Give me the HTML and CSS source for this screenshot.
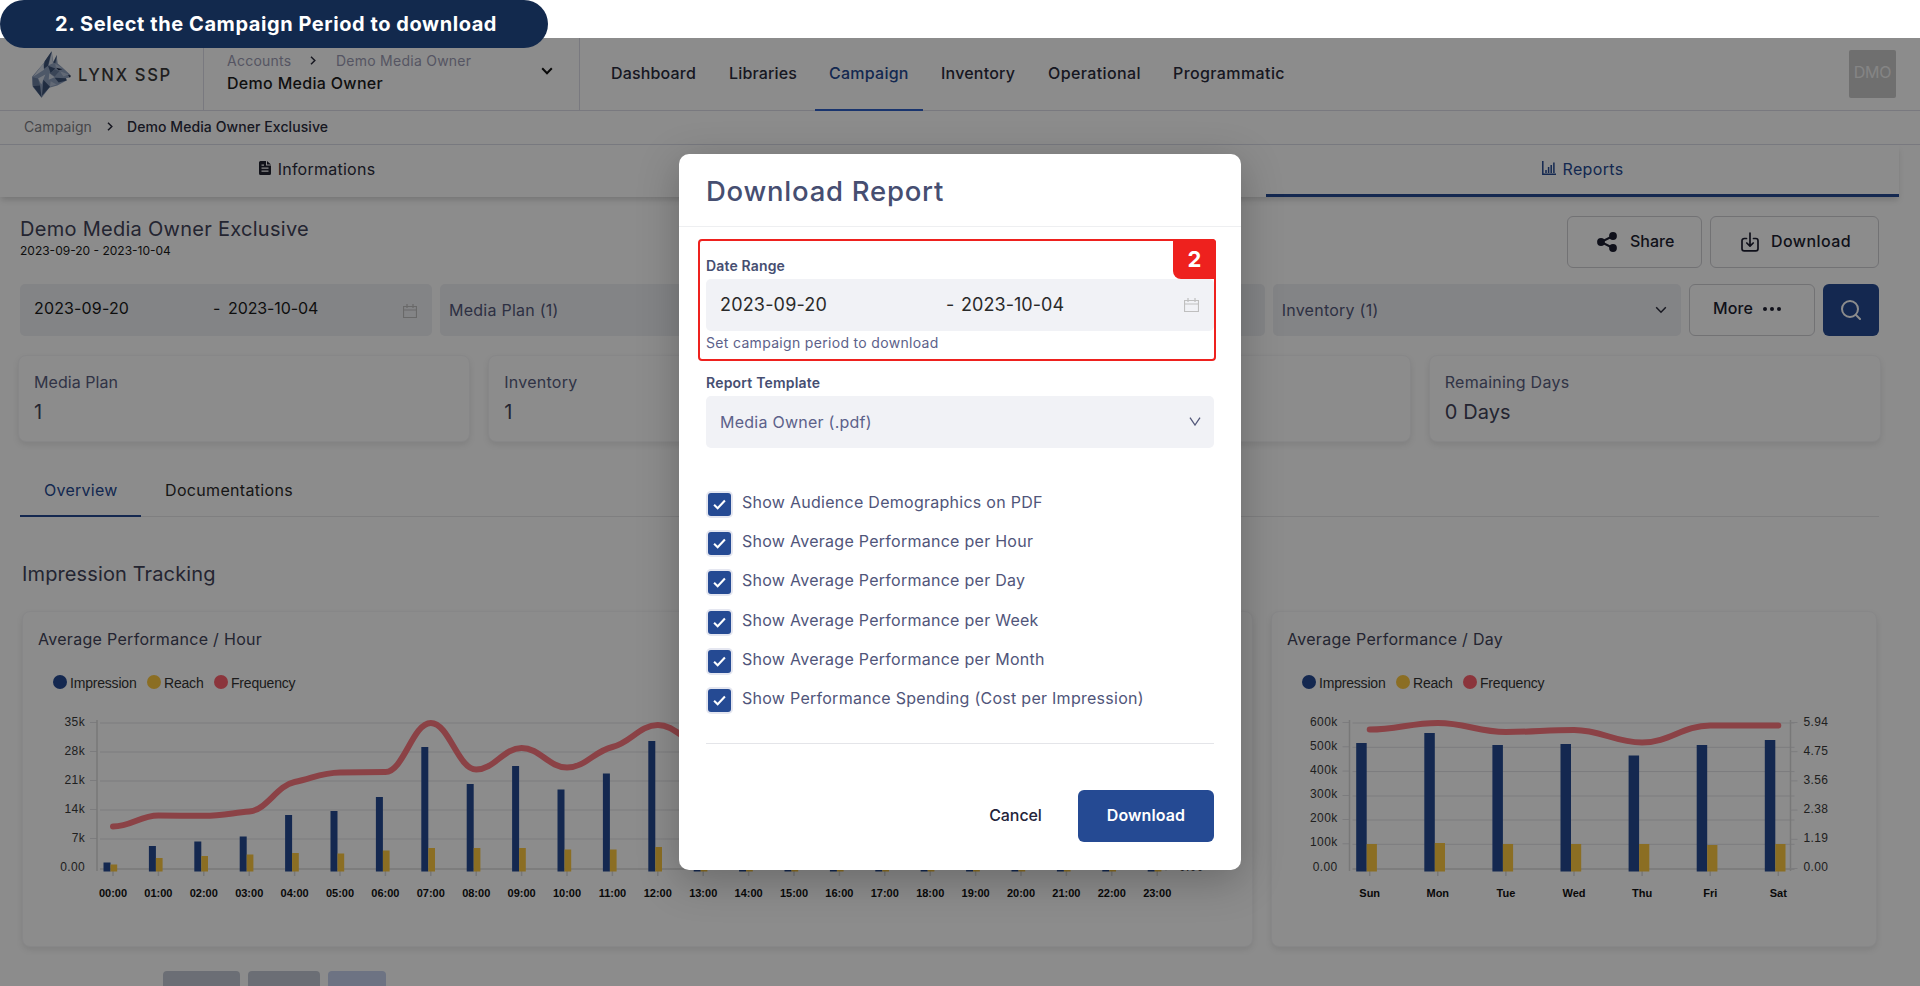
FILE: index.html
```html
<!DOCTYPE html>
<html lang="en">
<head>
<meta charset="utf-8">
<title>Download Report</title>
<link rel="stylesheet" href="styles.css">
</head>
<body>
<div class="app">
  <header class="header">
    <div class="brand">
      <svg class="wolf" viewBox="33 15 123 146">
        <path fill="#8fa0bd" d="M36 95 70 55 95 18 100 50 110 30 113 55 128 68 150 88 152 96 138 99 140 106 112 121 88 128 65 158 38 125z"/>
        <path fill="#3d5377" d="M95 18 74 48 70 72 84 62zM100 52 111 29 106 54zM38 122 65 158 60 120zM84 62 106 70 92 84zM70 104 90 125 66 152zM104 98 138 99 140 106 116 112z"/>
        <path fill="#d3dbe8" d="M70 55 72 74 50 88 40 94zM95 24 99 54 86 60zM88 84 104 96 86 104zM76 88 64 118 54 100z"/>
        <path fill="#b3c0d6" d="M106 56 126 68 108 70zM120 78 146 88 130 94zM92 108 110 118 90 124z"/>
        <path fill="#6b7e9f" d="M38 96 54 100 60 120 38 120zM104 72 118 78 104 94 90 84z"/>
        <path fill="#1a2744" d="M108 68 127 72 116 75zM144 89 153 92 149 97z"/>
      </svg>
      <span class="brand-name">LYNX SSP</span>
    </div>
    <div class="account">
      <div class="account-text">
        <div class="account-path"><span class="p1">Accounts</span>
          <svg width="6" height="9" viewBox="0 0 6 9"><path class="ln" d="M1 .8 4.8 4.5 1 8.2"/></svg>
          <span class="p2">Demo Media Owner</span></div>
        <div class="account-name">Demo Media Owner</div>
      </div>
      <svg class="account-caret" width="12" height="8" viewBox="0 0 12 8"><path class="ln thick" d="M1.2 1.3 6 6.2 10.8 1.3"/></svg>
    </div>
    <nav class="nav">
      <a class="n1">Dashboard</a><a class="n2">Libraries</a><a class="n3 active">Campaign</a><a class="n4">Inventory</a><a class="n5">Operational</a><a class="n6">Programmatic</a>
    </nav>
    <div class="avatar">DMO</div>
  </header>
  <div class="crumbs"><span class="c1">Campaign</span>
    <svg width="6" height="9" viewBox="0 0 6 9"><path class="ln" d="M1 .8 4.8 4.5 1 8.2"/></svg>
    <span class="c2">Demo Media Owner Exclusive</span></div>
  <div class="tabs">
    <div class="tab">
      <svg width="12" height="14" viewBox="0 0 12 14"><path fill="#222330" fill-rule="evenodd" d="M1.5 0H7v4.5h5v8a1.5 1.5 0 0 1-1.5 1.5h-9A1.5 1.5 0 0 1 0 12.500V1.500A1.500 1.500 0 0 1 1.500 0zM2.500 6.500v1.200h7V6.500zM2.500 9.500v1.200h7V9.500zM2.500 3.500v1.200H5V3.500zM8 0l4 3.500H8z"/></svg>
      <span>Informations</span>
    </div>
    <div class="tab"></div>
    <div class="tab active">
      <svg width="14" height="14" viewBox="0 0 14 14"><path fill="none" stroke="#254a93" stroke-width="1.500" d="M.8 0v13.200H14M4 12V9M6.600 12V6M9.200 12V4M11.900 12V1.500"/></svg>
      <span class="reports">Reports</span>
    </div>
  </div>

  <main class="content">
    <div class="title-row">
      <div>
        <h1>Demo Media Owner Exclusive</h1>
        <div class="dates">2023-09-20 - 2023-10-04</div>
      </div>
      <div class="actions">
        <button class="btn share">
          <svg width="20" height="20" viewBox="0 0 20 20"><path fill="none" stroke="#1d1e30" stroke-width="2" d="M16 4 4 10l12 6"/><g fill="#1d1e30"><circle cx="4" cy="10" r="3.900"/><circle cx="16" cy="4" r="3.900"/><circle cx="16" cy="16" r="3.900"/></g></svg>
          <span>Share</span></button>
        <button class="btn dl">
          <svg width="18" height="20" viewBox="0 0 18 20"><path fill="none" stroke="#1d1e30" stroke-width="1.700" stroke-linecap="round" stroke-linejoin="round" d="M5.500 6.500H3.200a2.200 2.200 0 0 0-2.200 2.200v8a2.200 2.200 0 0 0 2.200 2.200h11.600a2.200 2.200 0 0 0 2.200-2.200v-8a2.200 2.200 0 0 0-2.200-2.200h-2.300M9 1v13M5.800 11 9 14.200 12.200 11"/></svg>
          <span>Download</span></button>
      </div>
    </div>

    <div class="filters">
      <div class="range">
        <span class="from">2023-09-20</span><span class="dash">-</span><span class="to">2023-10-04</span>
        <svg width="14" height="14" viewBox="0 0 14 14"><path class="cal" d="M.5 2.500h13v11H.5zM.5 6h13M4 0v4M10 0v4"/></svg>
      </div>
      <div class="select"><span>Media Plan (1)</span></div>
      <div class="select"></div>
      <div class="select"><span>Inventory (1)</span><svg width="12" height="8" viewBox="0 0 12 8"><path class="ln" d="M1.200 1.300 6 6.200 10.800 1.300"/></svg></div>
      <button class="btn more"><span>More</span><svg width="18" height="4" viewBox="0 0 18 4"><g fill="#1d1e30"><circle cx="2" cy="2" r="2"/><circle cx="9" cy="2" r="2"/><circle cx="16" cy="2" r="2"/></g></svg></button>
      <button class="search"><svg width="20" height="20" viewBox="0 0 20 20"><g fill="none" stroke="#fff" stroke-width="2" stroke-linecap="round"><circle cx="9" cy="9" r="8"/><path d="M15 15l4 4"/></g></svg></button>
    </div>

    <div class="stats">
      <div class="card stat"><div class="label tight">Media Plan</div><div class="value">1</div></div>
      <div class="card stat"><div class="label">Inventory</div><div class="value">1</div></div>
      <div class="card stat"></div>
      <div class="card stat"><div class="label">Remaining Days</div><div class="value">0 Days</div></div>
    </div>

    <div class="subtabs"><div class="subtab active">Overview</div><div class="subtab docs">Documentations</div></div>

    <h2>Impression Tracking</h2>
    <div class="charts">
      <section class="card chart hour">
        <h3>Average Performance / Hour</h3>
        <div class="legend"><i class="dot blue"></i><span class="l1">Impression</span><i class="dot yellow"></i><span class="l2">Reach</span><i class="dot red"></i><span class="l3">Frequency</span></div>
        <svg id="hour" width="1229" height="200" viewBox="23 710 1229 200"></svg>
      </section>
      <section class="card chart day">
        <h3>Average Performance / Day</h3>
        <div class="legend"><i class="dot blue"></i><span class="l1">Impression</span><i class="dot yellow"></i><span class="l2">Reach</span><i class="dot red"></i><span class="l3">Frequency</span></div>
        <svg id="day" width="604" height="200" viewBox="1272 710 604 200"></svg>
      </section>
    </div>
    <div class="pills"><i class="pa"></i><i class="pb"></i><i class="pc"></i></div>
  </main>
</div>

<div class="overlay"></div>
<div class="banner">2. Select the Campaign Period to download</div>

<div class="modal">
  <div class="modal-head">Download Report</div>
  <div class="modal-body">
    <div class="highlight">
      <label>Date Range</label>
      <div class="field">
        <span class="from">2023-09-20</span><span class="dash">-</span><span class="to">2023-10-04</span>
        <svg width="15" height="14" viewBox="0 0 15 14"><path class="cal" d="M.5 2.500h14v11H.5zM.5 6h14M4 0v4M11 0v4"/></svg>
      </div>
      <div class="hint">Set campaign period to download</div>
      <div class="badge">2</div>
    </div>
    <label class="tpl">Report Template</label>
    <div class="field template"><span>Media Owner (.pdf)</span><svg width="12" height="9" viewBox="0 0 12 9"><path class="ln v" d="M1 .7 6 8 11 .7"/></svg></div>
    <div class="checks">
      <div class="check"><i><svg viewBox="0 0 12 10"><path d="M1 5.200 4.300 8.500 11 1.300"/></svg></i><span>Show Audience Demographics on PDF</span></div>
      <div class="check"><i><svg viewBox="0 0 12 10"><path d="M1 5.200 4.300 8.500 11 1.300"/></svg></i><span>Show Average Performance per Hour</span></div>
      <div class="check"><i><svg viewBox="0 0 12 10"><path d="M1 5.200 4.300 8.500 11 1.300"/></svg></i><span>Show Average Performance per Day</span></div>
      <div class="check"><i><svg viewBox="0 0 12 10"><path d="M1 5.200 4.300 8.500 11 1.300"/></svg></i><span>Show Average Performance per Week</span></div>
      <div class="check"><i><svg viewBox="0 0 12 10"><path d="M1 5.200 4.300 8.500 11 1.300"/></svg></i><span>Show Average Performance per Month</span></div>
      <div class="check"><i><svg viewBox="0 0 12 10"><path d="M1 5.200 4.300 8.500 11 1.300"/></svg></i><span>Show Performance Spending (Cost per Impression)</span></div>
    </div>
    <div class="modal-foot"><button class="cancel">Cancel</button><button class="primary">Download</button></div>
  </div>
</div>
<script src="charts.js"></script>
</body>
</html>
```
FILE: styles.css
```css
* { box-sizing: border-box; }
body {
  margin: 0; width: 1920px; height: 986px; overflow: hidden; position: relative;
  background: #fff; color: #2b2c3c;
  font: 400 16px/24px Inter, "Open Sans", sans-serif; letter-spacing: .25px;
}
button { font: inherit; letter-spacing: inherit; color: inherit; padding: 0; margin: 0; border: 0; background: none; }
h1, h2, h3 { margin: 0; font-weight: 400; }
svg { display: block; flex: none; }
span, a { white-space: nowrap; }
.ln { fill: none; stroke: #2b2c3c; stroke-width: 1.5; }
.ln.thick { stroke: #111; stroke-width: 2; }
.ln.v { stroke: #53587a; stroke-width: 1.3; }
.cal { fill: none; stroke: #bfbfbf; stroke-width: 1.2; }

.app { padding-top: 38px; height: 986px; overflow: hidden; }
.header { height: 73px; display: flex; border-bottom: 1px solid #dcdde8; }
.brand { width: 204px; border-right: 1px solid #dcdde8; display: flex; padding: 12px 0 0 31px; }
.wolf { width: 41px; height: 49px; }
.brand-name { margin: 13px 0 0 6px; font-size: 17.500px; font-weight: 500; letter-spacing: 1.700px; color: #3a3a3a; line-height: 24px; transform: scaleX(.95); transform-origin: left; }
.account { width: 376px; border-right: 1px solid #dcdde8; display: flex; }
.account-text { width: 337px; padding: 14px 0 0 23px; }
.account-path { display: flex; font-size: 14px; line-height: 18px; color: #9c9cb4; }
.account-path .p1 { width: 83px; }
.account-path .p2 { margin-left: 20px; }
.account-path svg { margin-top: 4px; }
.account-name { font-weight: 500; letter-spacing: .31px; line-height: 22px; margin-top: 2px; color: #1c1c1c; }
.account-caret { margin-top: 29px; }
.nav { display: flex; gap: 4px; margin-left: 17px; flex: 1; font-weight: 500; }
.nav a { height: 73px; line-height: 70px; padding-left: 14px; }
.n1 { width: 114px; } .n2 { width: 96px; }
.n3 { width: 108px; } .n4 { width: 103px; letter-spacing: .2px; }
.n5 { width: 121px; letter-spacing: .4px; } .n6 { letter-spacing: .4px; }
.n1 { letter-spacing: .17px; } .n2 { letter-spacing: .15px; }
.nav .active { color: #254a93; border-bottom: 2px solid #2f5fc9; }
.avatar { width: 47px; height: 48px; margin: 12px 24px 0 0; background: #cacaca; color: #f2f2f2; border-radius: 2px; text-align: center; line-height: 45px; letter-spacing: -.2px; }
.crumbs { height: 34px; border-bottom: 1px solid #dcdde8; display: flex; align-items: center; padding: 0 0 2px 24px; font-size: 14px; }
.crumbs .c1 { width: 83px; color: #7f7f86; letter-spacing: .1px; }
.crumbs .c2 { margin-left: 14px; font-weight: 500; letter-spacing: .08px; }
.tabs { width: 1899px; height: 52px; display: flex; box-shadow: 0 4px 6px -1px rgba(0,0,0,.16); }
.tab { flex: 1; display: flex; justify-content: center; gap: 7px; padding: 12px 0 0 1px; height: 52px; }
.tab svg { margin-top: 4px; }
.tab.active { color: #254a93; border-bottom: 3px solid #254a93; gap: 6px; }
.reports { letter-spacing: .35px; }

.content { padding: 19px 39px 0 20px; width: 1918px; }
.title-row { display: flex; justify-content: space-between; height: 52px; }
h1 { font-size: 20px; letter-spacing: .28px; line-height: 26px; color: #42445a; }
.dates { font-size: 12px; line-height: 18px; letter-spacing: 0; color: #1a1a1a; }
.actions { display: flex; gap: 8px; }
.btn { height: 52px; display: flex; align-items: center; border: 1px solid #cfcfd4; border-radius: 6px; font-weight: 500; color: #1d1e30; }
.btn span { padding-bottom: 2px; }
.share { width: 135px; padding-left: 29px; gap: 13px; letter-spacing: 0; }
.dl { width: 169px; padding-left: 30px; gap: 12px; letter-spacing: .42px; }
.filters { display: flex; gap: 8px; margin-top: 16px; }
.range, .select { height: 52px; background: #eff0f4; border-radius: 5px; display: flex; align-items: center; }
.range { width: 412px; padding: 0 15px 4px 14px; color: #1a1a1a; }
.range .from { width: 179px; letter-spacing: .15px; }
.range .dash { width: 15px; }
.range .to { flex: 1; letter-spacing: -.1px; }
.range svg { margin-top: 5px; }
.select { flex: 1; padding: 0 14px 1px 9px; color: #53587a; justify-content: space-between; }
.more { width: 126px; padding: 0 0 2px 23px; gap: 10px; }
.more span { letter-spacing: .1px; }
.search { width: 56px; height: 52px; background: #254a93; border-radius: 6px; display: flex; align-items: center; justify-content: center; }
.card { background: #fff; border: 1px solid #f6f6f8; border-radius: 8px; box-shadow: 0 3px 6px rgba(0,0,0,.09); }
.stats { display: grid; grid-template-columns: repeat(4, 1fr); gap: 18px; margin: 19px -2px 0; }
.stat { height: 87px; padding: 14px 15px; }
.label { color: #595e80; height: 24px; }
.tight { letter-spacing: .05px; }
.value { color: #42445a; font-size: 20px; line-height: 28px; margin-top: 4px; letter-spacing: .1px; }
.subtabs { display: flex; margin-top: 24px; height: 51px; border-bottom: 1px solid #e8e8ea; }
.subtab { height: 51px; line-height: 49px; color: #2b2b2b; }
.subtab.active { width: 121px; padding-left: 24px; color: #254a93; border-bottom: 2px solid #254a93; }
.docs { margin-left: 24px; letter-spacing: .33px; }
h2 { font-size: 20px; line-height: 28px; margin: 43px 0 0 2px; letter-spacing: .12px; color: #42445a; }
.charts { display: flex; gap: 18px; margin: 23px 2px 0; }
.chart { height: 336px; padding-top: 15px; }
.hour { width: 1231px; } .day { width: 606px; }
h3 { font-size: 16px; line-height: 24px; padding-left: 15px; letter-spacing: .3px; color: #42445a; }
.legend { display: flex; align-items: center; height: 20px; margin: 22px 0 0 30px; font: 14px/20px "Liberation Sans", Arial, sans-serif; letter-spacing: -.2px; color: #333; }
.dot { width: 14px; height: 14px; border-radius: 50%; margin: -3px 3px 0 0; }
.l1 { width: 77px; } .l2 { width: 50px; }
.blue { background: #254a93; } .yellow { background: #fdc841; } .red { background: #fd626d; }
.chart svg { margin-top: 16px; font-family: "Liberation Sans", Arial, sans-serif; letter-spacing: 0; }
.ytxt { font-size: 12px; fill: #3a3a3a; letter-spacing: .35px; }
.xtxt { font-size: 11px; font-weight: 700; fill: #111; text-anchor: middle; }
.end { text-anchor: end; }
.grid { stroke: #e2e2e6; stroke-width: 1; fill: none; }
.axis { stroke: #dadada; stroke-width: 1.500; fill: none; }
.freq { stroke: #fd7880; stroke-width: 6; fill: none; stroke-linecap: round; }
.pills { display: flex; margin: 24px 0 0 143px; gap: 8px; }
.pills i { height: 40px; border-radius: 4px; background: #c4c9d6; }
.pa { width: 77px; } .pb { width: 72px; } .pills .pc { width: 58px; background: #c6d2ee; }

.overlay { position: absolute; left: 0; top: 38px; width: 1920px; height: 948px; background: rgba(0,0,0,.45); }
.banner { position: absolute; left: 0; top: 0; width: 548px; height: 48px; border-radius: 24px; background: #12294d; color: #fff; font-weight: 700; font-size: 20px; line-height: 48px; padding-left: 55px; letter-spacing: .57px; white-space: nowrap; }

.modal { position: absolute; left: 679px; top: 154px; width: 562px; height: 716px; background: #fff; border-radius: 10px; box-shadow: 0 10px 40px rgba(0,0,0,.25); color: #464e71; }
.modal-head { height: 73px; border-bottom: 1px solid #eeeff1; font-size: 27.500px; font-weight: 500; line-height: 74px; padding-left: 27px; letter-spacing: .75px; }
.modal-body { padding: 12px 27px 0 19px; }
.highlight { position: relative; height: 122px; border: 2px solid #ee211e; border-radius: 4px; padding: 14px 0 0 6px; margin-right: -2px; }
.modal label { display: block; font-size: 14px; font-weight: 600; line-height: 22px; letter-spacing: .15px; }
.field { height: 52px; border-radius: 5px; background: #f1f2f6; display: flex; align-items: center; padding: 0 15px 1px; margin-top: 2px; }
.field .from { width: 226px; } .field .dash { width: 15px; } .field .to { flex: 1; letter-spacing: .05px; }
.highlight .field { color: #2a2a2a; font-size: 18px; letter-spacing: .18px; padding-left: 14px; }
.hint { font-size: 14px; line-height: 22px; margin-top: 1px; letter-spacing: .32px; color: #5c618a; }
.badge { position: absolute; right: -2px; top: -2px; width: 43px; height: 40px; border-radius: 0 4px 0 8px; background: #ee211e; color: #fff; font-size: 22px; font-weight: 700; text-align: center; line-height: 41px; letter-spacing: 0; }
.modal .tpl { margin: 11px 0 0 8px; letter-spacing: .2px; }
.template { margin: 2px 0 0 8px; justify-content: space-between; color: #5c618a; letter-spacing: .25px; padding-right: 13px; padding-left: 14px; }
.checks { margin-left: 8px; height: 296px; border-bottom: 1px solid #e4e5e9; padding-top: 42px; }
.check { height: 39.200px; display: flex; letter-spacing: .27px; color: #50557a; }
.check i { width: 23px; height: 23px; margin: 3px 11px 0 2px; background: #254a93; border-radius: 3px; box-shadow: 0 0 0 2px #e4e6f0; display: flex; align-items: center; justify-content: center; }
.check svg { width: 13px; height: 11px; fill: none; stroke: #fff; stroke-width: 1.900; }
.modal-foot { display: flex; justify-content: flex-end; padding-top: 46px; }
.cancel { width: 53px; margin-right: 36px; padding-bottom: 3px; font-weight: 500; letter-spacing: -.1px; color: #23243a; }
.primary { width: 136px; height: 52px; padding-bottom: 3px; background: #254a93; color: #fff; border-radius: 6px; font-weight: 600; letter-spacing: .1px; }
```
FILE: charts.js
```js
const BASE = 872;

// Flat tangent at turning points, monotone slope elsewhere.
function curve(p) {
  const n = p.length, s = [], m = [];
  for (let i = 0; i < n - 1; i++) s.push((p[i + 1][1] - p[i][1]) / (p[i + 1][0] - p[i][0]));
  for (let i = 0; i < n; i++) {
    if (i === 0 || i === n - 1) m.push(0);
    else if (s[i - 1] * s[i] <= 0) m.push(0);
    else m.push(Math.sign(s[i]) * Math.min(Math.abs(s[i - 1]), Math.abs(s[i]), Math.abs(s[i - 1] + s[i]) / 4));
  }
  let d = `M${p[0]}`;
  for (let i = 0; i < n - 1; i++) {
    const h = (p[i + 1][0] - p[i][0]) / 2.5;
    d += `C${p[i][0] + h} ${p[i][1] + m[i] * h} ${p[i + 1][0] - h} ${p[i + 1][1] - m[i + 1] * h} ${p[i + 1]}`;
  }
  return d;
}

function draw(id, c) {
  let o = '';
  c.grid.forEach(y => { o += `<path class="grid" d="M${c.left + 3} ${y}H${c.right + 4}M${c.left - 7} ${y - .5}H${c.left}"/>`; });
  o += `<path class="axis" d="M${c.left} 721V872M${c.right} 721V872M${c.left + 3} 870H${c.right + 4}"/>`;
  c.rlabels.forEach(([i, t]) => {
    const y = 723.500 + i * 29.200;
    o += `<path class="grid" d="M${c.right} ${y}h7"/><text class="ytxt" x="${c.right + 13}" y="${726.500 + i * 29}">${t}</text>`;
  });
  c.ylabels.forEach((t, i) => {
    o += `<text class="ytxt end" x="${c.left - 12}" y="${726.500 + i * 145 / (c.ylabels.length - 1)}">${t}</text>`;
  });
  const pts = [];
  c.labels.forEach((t, i) => {
    const x = c.x0 + c.step * i;
    o += `<path class="axis" d="M${x} 870v7"/><text class="xtxt" x="${x}" y="898">${t}</text>`;
    o += `<rect x="${x + c.off}" y="${c.imp[i]}" width="${c.bw}" height="${BASE + .5 - c.imp[i]}" fill="#254a93"/>`;
    o += `<rect x="${x + c.off + c.bw}" y="${c.reach[i]}" width="${c.bw - .3}" height="${BASE + .5 - c.reach[i]}" fill="#fdc841"/>`;
    pts.push([x, c.freq[i]]);
  });
  o += `<path class="freq" d="${curve(pts)}"/>`;
  document.getElementById(id).innerHTML = o;
}

draw('hour', {
  left: 97, right: 1166, x0: 113, step: 45.4, off: -9.500, bw: 7,
  grid: [724, 753, 782, 811, 840],
  ylabels: ['35k', '28k', '21k', '14k', '7k', '0.00'],
  rlabels: [[5, '0.00']],
  labels: Array.from({ length: 24 }, (_, i) => String(i).padStart(2, '0') + ':00'),
  imp: [863.500, 847, 842.500, 837.500, 816, 812, 798, 748, 785, 767, 790.500, 774.500, 742, 760, 760, 755, 750, 745, 750, 760, 780, 800, 820, 840],
  reach: [865.500, 859, 857, 855.500, 854, 854.500, 851.500, 849, 849, 849, 850.500, 850.500, 848, 849, 849, 849, 849, 849, 849, 849, 851, 853, 855, 858],
  freq: [827.500, 816.500, 816.800, 812.500, 783, 773.500, 773, 724, 770.500, 749, 768.500, 748, 726, 745, 745, 742, 738, 735, 740, 750, 760, 775, 790, 800]
});

draw('day', {
  left: 1349.500, right: 1790.500, x0: 1369.700, step: 68.100, off: -13.500, bw: 10.500,
  grid: [724, 748.300, 772.600, 797, 821, 845.300],
  ylabels: ['600k', '500k', '400k', '300k', '200k', '100k', '0.00'],
  rlabels: [[0, '5.94'], [1, '4.75'], [2, '3.56'], [3, '2.38'], [4, '1.19'], [5, '0.00']],
  labels: ['Sun', 'Mon', 'Tue', 'Wed', 'Thu', 'Fri', 'Sat'],
  imp: [744, 734, 746, 745, 756.500, 746, 741],
  reach: [845, 844, 845, 845, 845, 846, 845],
  freq: [730.600, 724, 733, 731, 743.500, 726.500, 726.500]
});
```
